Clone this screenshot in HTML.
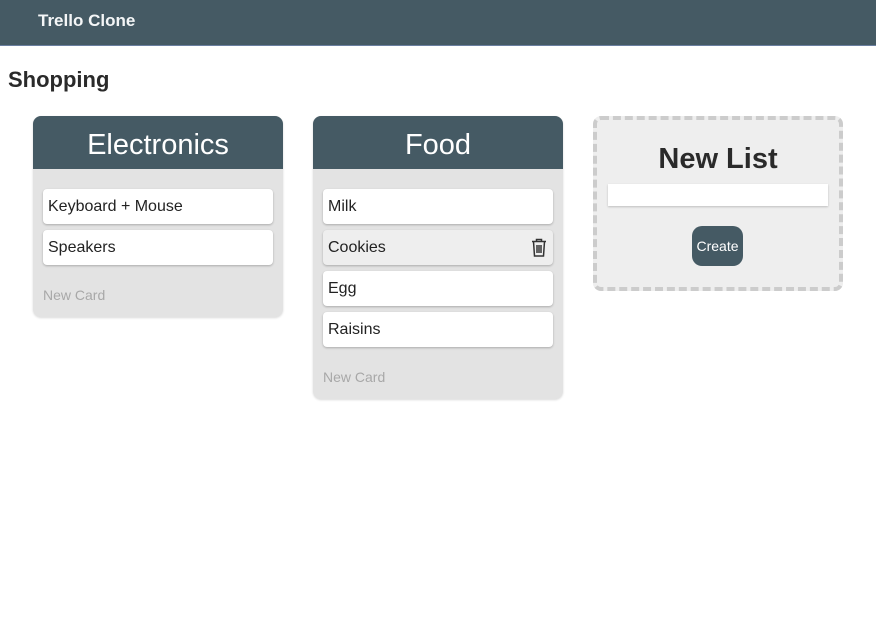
<!DOCTYPE html>
<html><head><style>
body{margin:0;width:876px;height:640px;background:#fff;font-family:"Liberation Sans",Helvetica,Arial,sans-serif;position:relative;overflow:hidden}
.nav{position:absolute;left:0;top:0;width:876px;height:45px;background:#455a64;border-bottom:1px solid #6a7fa0}
.nav span{position:absolute;left:38px;top:11px;font-size:17px;font-weight:bold;color:#f4f6f7}
h1{position:absolute;left:8px;top:67px;margin:0;font-size:22px;font-weight:bold;color:#2a2a2a}
.list{position:absolute;top:116px;width:250px;background:#e3e3e3;border-radius:8px;box-shadow:0 1px 2px rgba(0,0,0,.15)}
.lh{height:53px;background:#455a64;border-radius:8px 8px 0 0;color:#fff;font-size:29px;text-align:center;line-height:58px}
.cards{padding:20px 10px 0}
.card{height:35px;background:#fff;border-radius:4px;margin-bottom:6px;box-shadow:0 1px 2px rgba(0,0,0,.25);font-size:16px;line-height:36px;padding-left:5px;color:#222;position:relative}
.nc{color:#a8a8a8;font-size:14px;padding:16px 10px 14px}
.nl{position:absolute;left:593px;top:116px;width:242px;height:167px;background:#eee;border:4px dashed #ccc;border-radius:8px}
.nl h2{margin:0;position:absolute;left:0;width:242px;top:23px;text-align:center;font-size:29px;font-weight:bold;color:#2a2a2a}
.nl .in{position:absolute;left:11px;top:64px;width:220px;height:22px;background:#fff;box-shadow:0 1px 2px rgba(0,0,0,.2)}
.nl .bt{position:absolute;left:95px;top:106px;width:51px;height:40px;background:#455a64;border-radius:10px;color:#fff;font-size:14px;line-height:40px;text-align:center}
</style></head><body>
<div class="nav"><span>Trello Clone</span></div>
<h1>Shopping</h1>
<div class="list" style="left:33px">
<div class="lh">Electronics</div>
<div class="cards"><div class="card">Keyboard + Mouse</div><div class="card">Speakers</div></div>
<div class="nc">New Card</div>
</div>
<div class="list" style="left:313px">
<div class="lh">Food</div>
<div class="cards"><div class="card">Milk</div><div class="card" style="background:#eee">Cookies
<svg style="position:absolute;right:6px;top:8px" width="16" height="19" viewBox="0 0 16 19" fill="none" stroke="#333" stroke-width="1.5"><path d="M1 3.5h14M5.5 3.5V1.5h5v2M2.5 3.5l1 14.5h9l1-14.5M6 7v8M8 7v8M10 7v8"/></svg></div><div class="card">Egg</div><div class="card">Raisins</div></div>
<div class="nc">New Card</div>
</div>
<div class="nl"><h2>New List</h2><div class="in"></div><div class="bt">Create</div></div>
</body></html>
